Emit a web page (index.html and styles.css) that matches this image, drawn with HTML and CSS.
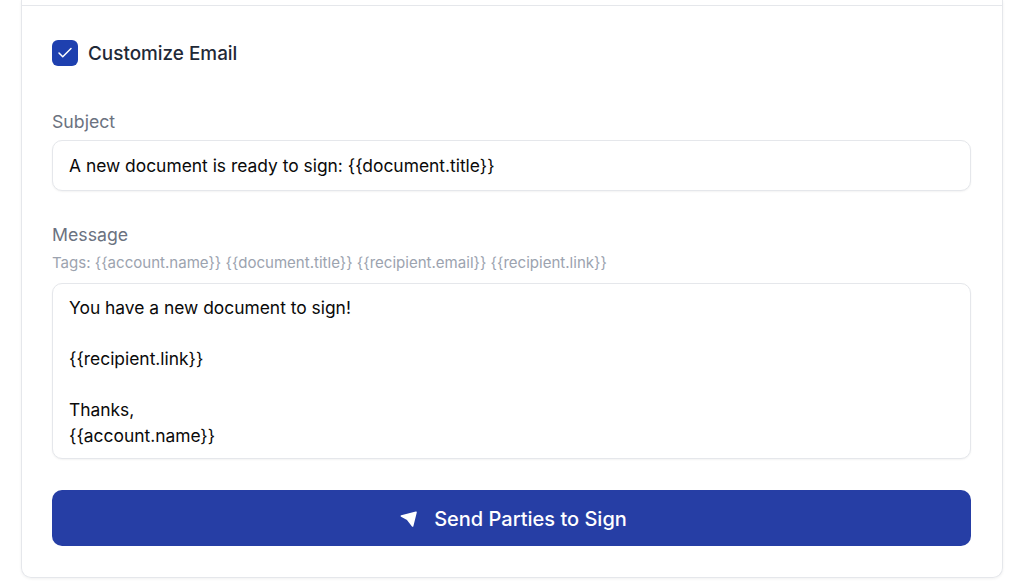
FILE: index.html
```html
<!doctype html>
<html lang="en">
<head>
  <meta charset="UTF-8">
  <title>Customize Email</title>
  <link rel="stylesheet" href="styles.css">
</head>
<body>
  <div class="card">
    <div class="card-top"></div>
    <div class="card-body">
      <div class="check-row">
        <span class="checkbox">
          <svg width="18" height="18" viewBox="0 0 24 24" fill="none" stroke="#fff" stroke-width="2" stroke-linecap="round" stroke-linejoin="round"><path d="M20 6 9 17l-5-5"/></svg>
        </span>
        <span class="check-label">Customize Email</span>
      </div>

      <div class="label subject-label">Subject</div>
      <div class="field subject">A new document is ready to sign: {{document.title}}</div>

      <div class="label message-label">Message</div>
      <div class="tags">Tags: {{account.name}} {{document.title}} {{recipient.email}} {{recipient.link}}</div>
      <div class="field message">You have a new document to sign!<br><br>{{recipient.link}}<br><br>Thanks,<br>{{account.name}}</div>

      <div class="btn-send">
        <svg width="18" height="18" viewBox="0 0 18 18"><path d="M17 2.4 2.4 6 8.4 9.2 13.6 16z" fill="#fff" stroke="#fff" stroke-width="1.6" stroke-linejoin="round"/></svg>
        <span>Send Parties to Sign</span>
      </div>
    </div>
  </div>
</body>
</html>
```

FILE: styles.css
```css
* {
    box-sizing: border-box;
}

body {
    margin: 0;
    padding: 0 21px;
    height: 586px;
    overflow: hidden;
    background: #fff;
    font-family: Inter, "Liberation Sans", sans-serif;
}

.card {
    height: 578px;
    border: 1px solid #e5e7eb;
    border-top: 0;
    border-radius: 0 0 10px 10px;
    box-shadow: 0 1px 3px rgba(0, 0, 0, 0.06);
}

.card-top {
    height: 6px;
    border-bottom: 1px solid #e5e7eb;
}

.card-body {
    padding: 0 31px 0 30px;
}

.check-row {
    display: flex;
    align-items: center;
    gap: 10px;
    margin-top: 34px;
    height: 26px;
}

.checkbox {
    width: 26px;
    height: 26px;
    border-radius: 6px;
    background: #1e40af;
    display: flex;
    align-items: center;
    justify-content: center;
}

.check-label {
    font-size: 18.9px;
    font-weight: 500;
    color: #1f2937;
}

.label {
    font-size: 17.7px;
    line-height: 24px;
    color: #6b7280;
}

.subject-label {
    margin-top: 44px;
}

.field {
    border: 1px solid #e5e7eb;
    border-radius: 10px;
    box-shadow: 0 1px 2px rgba(0, 0, 0, 0.05);
    padding: 0 16px;
    font-size: 17.4px;
    color: #0a0a0a;
    background: #fff;
}

.subject {
    margin-top: 6px;
    height: 51px;
    line-height: 49px;
}

.message-label {
    margin-top: 32px;
}

.tags {
    margin-top: 6px;
    font-size: 15.05px;
    line-height: 20px;
    color: #9ca3af;
}

.message {
    margin-top: 10px;
    height: 176px;
    padding-top: 11px;
    line-height: 25.6px;
}

.btn-send {
    margin-top: 31px;
    height: 56px;
    padding: 1px 0 0 3px;
    border-radius: 10px;
    background: #263ea5;
    color: #fff;
    font-size: 20px;
    font-weight: 500;
    display: flex;
    align-items: center;
    justify-content: center;
    gap: 17px;
}
```
